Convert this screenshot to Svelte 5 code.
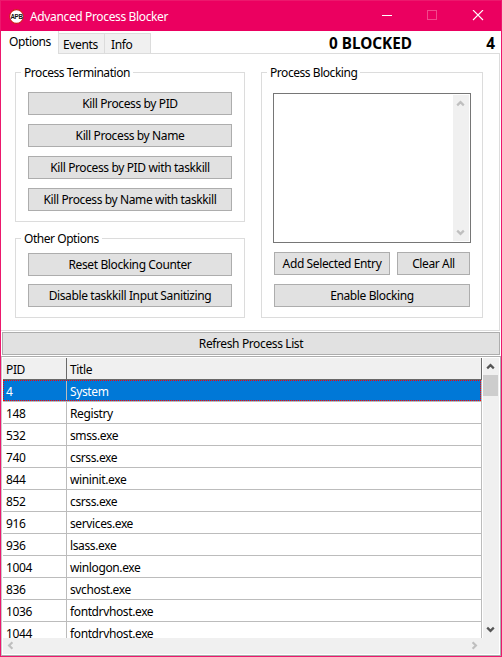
<script>
  const killActions = [
    'Kill Process by PID',
    'Kill Process by Name',
    'Kill Process by PID with taskkill',
    'Kill Process by Name with taskkill',
  ];
  const processes = [
    [4, 'System'],
    [148, 'Registry'],
    [532, 'smss.exe'],
    [740, 'csrss.exe'],
    [844, 'wininit.exe'],
    [852, 'csrss.exe'],
    [916, 'services.exe'],
    [936, 'lsass.exe'],
    [1004, 'winlogon.exe'],
    [836, 'svchost.exe'],
    [1036, 'fontdrvhost.exe'],
    [1044, 'fontdrvhost.exe'],
  ];
  let selected = $state(0);
  let blocked = $state(0);
</script>

{#snippet chevron(dir, tone)}
  <svg class="chev {dir}" width="9" height="9" viewBox="0 0 9 9" aria-hidden="true">
    <path d="M1.2 6.4 4.5 3.1 7.8 6.4" fill="none" stroke={tone} stroke-width="2.2" />
  </svg>
{/snippet}

<div class="window">
  <header class="titlebar">
    <svg class="logo" width="15" height="15" viewBox="0 0 15 15" aria-hidden="true">
      <circle cx="7.5" cy="7.5" r="6.9" fill="#fff" stroke="#d01a1a" stroke-width="1.1" />
      <text x="7.5" y="9.8" text-anchor="middle" textLength="12" lengthAdjust="spacingAndGlyphs" font-family="Liberation Sans, sans-serif" font-size="6.5" font-weight="700" fill="#111">APB</text>
    </svg>
    <span class="caption">Advanced Process Blocker</span>
    <svg class="controls" width="104" height="12" viewBox="0 0 104 12" fill="none" aria-hidden="true">
      <path d="M0 5.5H10" stroke="#fff" />
      <rect x="45.5" y=".5" width="9" height="9" stroke="#f2488c" />
      <path d="M91 0 101 10M101 0 91 10" stroke="#fff" stroke-width="1.1" />
    </svg>
  </header>

  <nav class="tabs">
    <div class="tab active">Options</div>
    <div class="tab events">Events</div>
    <div class="tab info">Info</div>
    <div class="status"><span class="count">{blocked} BLOCKED</span><span class="pid">{processes[selected][0]}</span></div>
  </nav>

  <main class="pane">
    <div class="column">
      <section class="group termination">
        <h2>Process Termination</h2>
        {#each killActions as label}
          <button>{label}</button>
        {/each}
      </section>
      <section class="group other">
        <h2>Other Options</h2>
        <button onclick={() => (blocked = 0)}>Reset Blocking Counter</button>
        <button>Disable taskkill Input Sanitizing</button>
      </section>
    </div>
    <section class="group blocking">
      <h2>Process Blocking</h2>
      <div class="listbox">
        <div class="track">{@render chevron('up', '#bfbfbf')}{@render chevron('down', '#bfbfbf')}</div>
      </div>
      <div class="pair">
        <button class="add">Add Selected Entry</button>
        <button class="clear">Clear All</button>
      </div>
      <button class="enable">Enable Blocking</button>
    </section>
  </main>

  <button class="refresh">Refresh Process List</button>

  <div class="grid">
    <div class="upper">
      <div class="table">
        <div class="row head"><span class="id">PID</span><span class="name">Title</span></div>
        {#each processes as [pid, title], i}
          <div class="row" class:selected={i === selected}>
            <span class="id">{pid}</span><span class="name">{title}</span>
            {#if i === selected}
              <svg class="focus" width="478" height="21" viewBox="0 0 478 21" shape-rendering="crispEdges" aria-hidden="true">
                <path d="M1 .5H478M1 20.5H478M.5 0V21M477.5 0V21" stroke="#f00" stroke-dasharray="1 1" />
              </svg>
            {/if}
          </div>
        {/each}
      </div>
      <div class="vscroll">
        {@render chevron('up', '#555')}
        <div class="thumb"></div>
        {@render chevron('down', '#555')}
      </div>
    </div>
    <div class="hscroll">{@render chevron('left', '#bfbfbf')}{@render chevron('right', '#bfbfbf')}</div>
  </div>
</div>

<style>
  .window {
    box-sizing: border-box;
    width: 502px;
    height: 657px;
    border: 1px solid #ec186d;
    background: #fff;
    display: flex;
    flex-direction: column;
    overflow: hidden;
    font: 12px/16px "Noto Sans", "Open Sans", sans-serif;
    letter-spacing: -0.38px;
    color: #000;
  }
  .window * { box-sizing: border-box; }
  .titlebar {
    height: 30px;
    flex: none;
    display: flex;
    align-items: center;
    padding-left: 8px;
    background: #eb0060;
    color: #fff;
  }
  .logo { margin-right: 6px; }
  .caption { flex: 1; white-space: nowrap; letter-spacing: -0.36px; padding-top: 1px; }
  .controls { margin-right: 15px; }
  .tabs {
    height: 23px;
    flex: none;
    display: flex;
    align-items: flex-end;
    border-bottom: 1px solid #dcdcdc;
    margin-right: 1px;
  }
  .tab {
    height: 20px;
    border: 1px solid #dcdcdc;
    border-width: 1px 1px 0 0;
    background: #f0f0f0;
    padding-top: 3px;
  }
  .tab.active {
    width: 58px;
    height: 23px;
    margin-bottom: -1px;
    border-top: 0;
    background: #fff;
    padding: 3px 0 0 8px;
  }
  .tab.events { width: 46px; padding-left: 4px; }
  .tab.info { width: 46px; padding-left: 6px; }
  .status {
    flex: 1;
    height: 22px;
    display: flex;
    justify-content: space-between;
    padding: 1px 5px 0 178px;
    font-size: 15.3px;
    line-height: 22px;
    font-weight: 700;
    letter-spacing: 0;
  }
  .pane {
    height: 277px;
    flex: none;
    margin-right: 1px;
    border-right: 1px solid #dcdcdc;
    border-bottom: 1px solid #dcdcdc;
    padding: 18px 16px 12px 14px;
    display: flex;
    justify-content: space-between;
  }
  .column { width: 230px; display: flex; flex-direction: column; gap: 16px; }
  .group {
    border: 1px solid #dcdcdc;
    padding: 0 12px;
    display: flex;
    flex-direction: column;
  }
  h2 {
    align-self: flex-start;
    height: 16px;
    margin: -8px 0 11px -7px;
    padding: 0 3px;
    background: #fff;
    font: inherit;
    letter-spacing: -0.45px;
    white-space: nowrap;
  }
  button {
    height: 23px;
    flex: none;
    border: 1px solid #adadad;
    border-radius: 0;
    background: #e1e1e1;
    padding: 1px 0 0;
    font: inherit;
    letter-spacing: inherit;
    color: #000;
    white-space: nowrap;
  }
  .termination { height: 150px; }
  .termination button { margin-bottom: 9px; }
  .other { height: 80px; }
  .other h2 { margin-bottom: 6px; }
  .other button { margin-bottom: 8px; }
  .blocking { width: 222px; height: 246px; padding: 0 11px; }
  .blocking h2 { margin: -8px 0 12px -6px; }
  .listbox {
    width: 198px;
    height: 150px;
    border: 1px solid #767676;
    padding: 1px;
    display: flex;
    justify-content: flex-end;
  }
  .track {
    width: 16px;
    background: #f0f0f0;
    display: flex;
    flex-direction: column;
    align-items: center;
    justify-content: space-between;
    padding: 4px 1px 4px 0;
  }
  .pair { display: flex; gap: 7px; margin: 9px 0 9px 1px; }
  .add { width: 116px; }
  .clear { width: 73px; }
  .enable { width: 196px; margin-left: 1px; }
  .refresh { margin: 1px 0 1px 1px; width: 498px; }
  .grid {
    flex: 1;
    min-height: 0;
    border: 1px solid #adadad;
    border-left-color: #c8c8c8;
    padding: 1px;
    display: flex;
    flex-direction: column;
  }
  .upper { height: 280px; flex: none; display: flex; }
  .table { width: 479px; overflow: hidden; }
  .row {
    height: 22px;
    display: flex;
    line-height: 23px;
    border-right: 1px solid #bcbcbc;
    border-bottom: 1px solid #bcbcbc;
  }
  .id { width: 64px; padding-left: 3px; border-right: 1px solid #bcbcbc; }
  .name { padding-left: 3px; }
  .head { background: #f0f0f0; border-color: #696969; }
  .head .id { border-color: #696969; }
  .selected { position: relative; background: #0078d7; color: #fff; }
  .focus { position: absolute; top: 0; left: 0; }
  .vscroll {
    width: 16px;
    margin-left: 1px;
    background: #f0f0f0;
    display: flex;
    flex-direction: column;
    align-items: center;
    padding: 4px 1px 4px 0;
  }
  .thumb { width: 15px; height: 21px; margin: 4px 0 auto; background: #cdcdcd; }
  .hscroll {
    flex: 1;
    background: #f0f0f0;
    display: flex;
    justify-content: space-between;
    align-items: center;
    padding: 0 20px 1px 3px;
  }
  .chev { display: block; flex: none; }
  .down { transform: rotate(180deg); }
  .left { transform: rotate(-90deg); }
  .right { transform: rotate(90deg); }
</style>
